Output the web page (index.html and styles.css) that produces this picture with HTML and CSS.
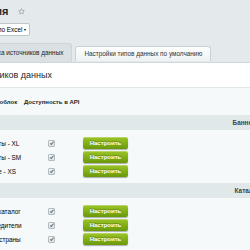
FILE: index.html
```html
<!DOCTYPE html>
<html lang="ru">
<head>
    <meta charset="UTF-8">
    <meta name="viewport" content="width=device-width, initial-scale=1.0">
    <title>Интеграция</title>
    <link rel="stylesheet" href="styles.css">
</head>
<body>
    <div class="page">
        <div class="title-bar">
            <h1 class="title">Интеграция</h1>
            <svg class="star" width="7" height="7" viewBox="0 0 14 14">
                <path d="M7 1.2l1.7 3.6 3.9.5-2.9 2.7.7 3.9L7 10l-3.4 1.9.7-3.9-2.9-2.7 3.9-.5z" fill="none" stroke="#8e9ba1" stroke-width="1.3" stroke-linejoin="round"/>
            </svg>
        </div>

        <div class="dropdown">
            <span>Выгрузка по Excel</span>
            <span class="caret"></span>
        </div>

        <div class="tabs">
            <div class="tab tab-active">Настройка источников данных</div>
            <div class="tab">Настройки типов данных по умолчанию</div>
        </div>

        <div class="panel">
            <div class="panel-title">Источников данных</div>
            <div class="panel-body">
                <div class="row row-head">
                    <div>Инфоблок</div>
                    <div>Доступность в API</div>
                    <div></div>
                </div>

                <div class="group">
                    <div class="group-title">Баннеры</div>
                    <div class="row">
                        <div>Слоты - XL</div>
                        <div class="cell-check"><span class="check"></span></div>
                        <div><button class="btn">Настроить</button></div>
                    </div>
                    <div class="row">
                        <div>Слоты - SM</div>
                        <div class="cell-check"><span class="check"></span></div>
                        <div><button class="btn">Настроить</button></div>
                    </div>
                    <div class="row">
                        <div>Поле - XS</div>
                        <div class="cell-check"><span class="check"></span></div>
                        <div><button class="btn">Настроить</button></div>
                    </div>
                </div>

                <div class="group">
                    <div class="group-title">Каталог</div>
                    <div class="row">
                        <div>Подкаталог</div>
                        <div class="cell-check"><span class="check"></span></div>
                        <div><button class="btn">Настроить</button></div>
                    </div>
                    <div class="row">
                        <div>Учредители</div>
                        <div class="cell-check"><span class="check"></span></div>
                        <div><button class="btn">Настроить</button></div>
                    </div>
                    <div class="row">
                        <div>Все страны</div>
                        <div class="cell-check"><span class="check"></span></div>
                        <div><button class="btn">Настроить</button></div>
                    </div>
                </div>
            </div>
        </div>
    </div>
</body>
</html>
```

FILE: styles.css
```css
html,
body {
    overflow: hidden;
}
body {
    margin: 0;
    background-color: #e4eaec;
    font-family: 'Liberation Sans', Arial, sans-serif;
    font-size: 6.4px;
    color: #000;
}
.page {
    margin-left: -36px;
    padding-top: 3px;
}
.title-bar {
    display: flex;
    align-items: center;
    height: 16px;
}
.title {
    margin: 0 0 0 -19px;
    font-size: 11px;
    font-weight: bold;
    color: #1f2629;
}
.star {
    margin-left: 10px;
}
.dropdown {
    display: flex;
    align-items: center;
    justify-content: space-between;
    box-sizing: border-box;
    width: 66px;
    height: 13px;
    margin-top: 4px;
    padding: 0 3px 0 4px;
    background-color: #fff;
    border: 1px solid #bcc7cb;
    border-radius: 2px;
}
.caret {
    width: 0;
    height: 0;
    border-left: 1.5px solid transparent;
    border-right: 1.5px solid transparent;
    border-top: 2.5px solid #000;
}
.tabs {
    display: flex;
    align-items: flex-end;
    gap: 3px;
    height: 19px;
    margin-top: 7px;
}
.tab {
    box-sizing: border-box;
    height: 15px;
    margin-bottom: 1px;
    padding: 0 8px;
    line-height: 14px;
    color: #2b3438;
    background: linear-gradient(#fdfefe, #eef2f3);
    border: 1px solid #c8d2d6;
    border-bottom: none;
    border-radius: 3px 3px 0 0;
}
.tab-active {
    height: 19px;
    margin-bottom: 0;
    line-height: 18px;
    color: #1d2427;
    background: #d9e1e4;
    border-color: #ccd6da;
}
.panel {
    width: 566px;
    border-top: 1px solid #cfd8dc;
    background-color: #fff;
}
.panel-title {
    height: 24px;
    padding-left: 6px;
    line-height: 24px;
    font-size: 9px;
    color: #1f2629;
}
.panel-body {
    padding-top: 7px;
    padding-bottom: 4px;
    background-color: #f5f9f9;
    border-top: 1px solid #e1e8ea;
}
.row {
    display: grid;
    grid-template-columns: 37.5px 55px 1fr;
    align-items: center;
    height: 14px;
    padding-left: 22.5px;
    white-space: nowrap;
}
.row-head {
    margin-bottom: 6px;
    font-size: 6px;
    font-weight: bold;
    color: #222b2e;
}
.group {
    margin-bottom: 5px;
}
.group-title {
    height: 15px;
    margin-bottom: 6px;
    line-height: 15px;
    text-align: center;
    font-weight: bold;
    color: #3a4549;
    background-color: #e0e8ea;
}
.cell-check {
    display: flex;
    justify-content: center;
}
.check {
    position: relative;
    box-sizing: border-box;
    width: 7px;
    height: 7px;
    background: linear-gradient(#f2f4f5, #dbe1e3);
    border: 1px solid #b3bdc1;
    border-radius: 1px;
}
.check::after {
    content: "";
    position: absolute;
    left: 1.6px;
    top: 0.2px;
    width: 1.4px;
    height: 2.6px;
    border-right: 1px solid #6b777c;
    border-bottom: 1px solid #6b777c;
    transform: rotate(40deg);
}
.btn {
    display: block;
    width: 45px;
    height: 12px;
    margin-left: 4px;
    padding: 0;
    font-family: inherit;
    font-size: 6px;
    font-weight: bold;
    color: #fff;
    text-shadow: 0 -1px 0 rgba(60, 90, 0, 0.5);
    background: linear-gradient(#9cc42a, #84b016 50%, #6a980a);
    border: none;
    border-radius: 2px;
    box-shadow: 0 1px 1px rgba(0, 0, 0, 0.3), inset 0 1px 0 rgba(255, 255, 255, 0.3);
}
```
